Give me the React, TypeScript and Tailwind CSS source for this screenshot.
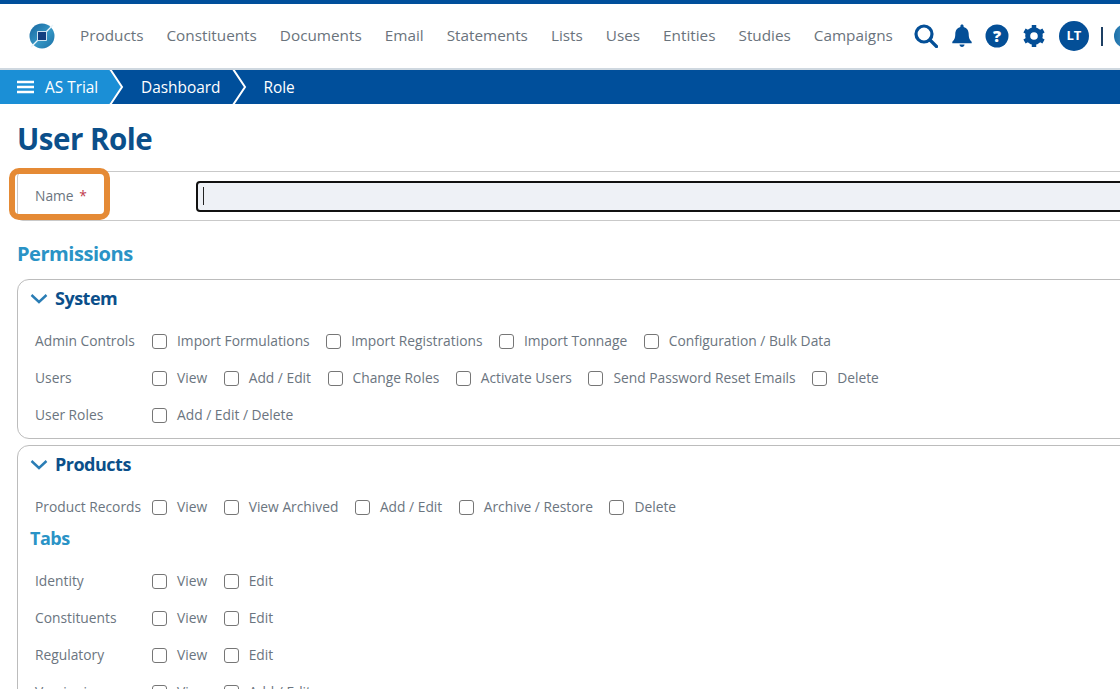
import React from "react";

const font = { fontFamily: '"Open Sans", sans-serif' };

function Check({ label }: { label: string }) {
  return (
    <div className="flex items-center shrink-0">
      <span className="w-[15px] h-[15px] border border-[#767676] rounded-[3px] bg-white shrink-0" />
      <span className="ml-[10px] text-[13.8px] text-[#6b7580] whitespace-nowrap">{label}</span>
    </div>
  );
}

function Row({ label, items }: { label: string; items: string[] }) {
  return (
    <div className="flex items-center h-[37px]">
      <div className="w-[117px] shrink-0 text-[13.8px] text-[#6b7580] whitespace-nowrap">{label}</div>
      <div className="flex items-center gap-[16.5px]">
        {items.map((l) => (
          <Check key={l} label={l} />
        ))}
      </div>
    </div>
  );
}

function Chevron() {
  return (
    <svg width="18" height="10" viewBox="0 0 18 10" fill="none" stroke="#2a7db5" strokeWidth="2.400" className="-ml-[5px]">
      <path d="M1.500 1l7.500 7 7.500-7" />
    </svg>
  );
}

const nav = ["Products", "Constituents", "Documents", "Email", "Statements", "Lists", "Uses", "Entities", "Studies", "Campaigns"];

export default function App() {
  return (
    <div className="w-[1120px] h-[689px] overflow-hidden bg-white" style={font}>
      <div className="h-[4px] bg-[#004f9b]" />
      <div className="h-[66px] flex items-center border-b-2 border-[#cfd8e0]">
        <svg width="26" height="26" viewBox="0 0 26 26" className="ml-[29px] shrink-0">
          <defs>
            <linearGradient id="logo" x1="0" y1="0" x2="1" y2="1">
              <stop offset="0" stopColor="#17659f" />
              <stop offset="0.55" stopColor="#3596c4" />
              <stop offset="1" stopColor="#1a6fa6" />
            </linearGradient>
          </defs>
          <circle cx="13" cy="13" r="12.500" fill="url(#logo)" />
          <path d="M2 24 L9 17 M17 9 L24 2" stroke="#eaf4fa" strokeWidth="1.400" />
          <rect x="8" y="8" width="10" height="10" rx="1" fill="#cfe4f1" />
          <rect x="9" y="9" width="8" height="8" fill="#123f80" />
        </svg>
        <nav className="flex ml-[25px] pb-[2px] gap-[23px] text-[15.3px] text-[#6a737c] whitespace-nowrap">
          {nav.map((n) => (
            <span key={n}>{n}</span>
          ))}
        </nav>
        <div className="flex items-center ml-[21px] shrink-0">
          <svg width="24" height="24" viewBox="0 0 24 24" fill="none" stroke="#044f97" strokeWidth="3.200" strokeLinecap="round">
            <circle cx="10" cy="10" r="8" />
            <path d="M16 16l6.500 6.500" />
          </svg>
          <svg width="24" height="24" viewBox="0 0 24 24" fill="#044f97" className="ml-[12px]">
            <path d="M12 .5c-1 0-1.600.7-1.600 1.600v.9C7 3.800 5.300 6.800 5.300 10c0 4.700-1.500 6.300-3 7.800v1.500h19.400v-1.500c-1.500-1.500-3-3.100-3-7.800 0-3.200-1.700-6.200-5.100-7V2.100c0-.9-.6-1.600-1.600-1.600z" />
            <path d="M9.500 20.500h5c0 1.300-1.100 2.500-2.500 2.500s-2.500-1.200-2.500-2.500z" />
          </svg>
          <svg width="24" height="24" viewBox="0 0 24 24" className="ml-[11px]">
            <circle cx="12" cy="12" r="11.500" fill="#044f97" />
            <text x="12" y="17.500" textAnchor="middle" fontSize="16" fontWeight="800" fill="#fff" fontFamily="Open Sans">?</text>
          </svg>
          <svg width="24" height="24" viewBox="0 0 24 24" className="ml-[13px]" fill="none" stroke="#044f97">
            <circle cx="12" cy="12" r="6.300" strokeWidth="5" />
            <path strokeWidth="4.500" d="M12 1v4M12 19v4M2.500 6.500l3.500 2M18 15.500l3.500 2M2.500 17.500l3.500-2M18 8.500l3.500-2" />
          </svg>
          <div className="ml-[13px] w-[30px] h-[30px] rounded-full bg-[#044f97] text-white text-[13px] font-bold flex items-center justify-center">LT</div>
          <div className="ml-[12px] w-[2px] h-[19px] bg-[#1d3f63]" />
          <div className="ml-[11px] w-[24px] h-[24px] rounded-full bg-gradient-to-r from-[#1b6fa8] to-[#62b4de] shrink-0" />
        </div>
      </div>
      <div className="h-[34px] flex items-stretch bg-[#004f9b] text-white text-[15.4px] relative">
        <div className="w-[110px] bg-[#1b8fd6] flex items-center pl-[17px] shrink-0">
          <svg width="17" height="14" viewBox="0 0 17 14" stroke="#fff" strokeWidth="2.400">
            <path d="M0 2h17M0 7h17M0 12h17" />
          </svg>
          <span className="ml-[11px] mt-[2px]">AS Trial</span>
        </div>
        <svg width="16" height="34" viewBox="0 0 16 34" className="absolute left-[109px] top-0">
          <path d="M0 0L13 17L0 34Z" fill="#1b8fd6" />
          <path d="M1 -1L13 17L1 35" fill="none" stroke="#fff" strokeWidth="2" />
        </svg>
        <span className="ml-[31px] mt-[2px] self-center">Dashboard</span>
        <svg width="16" height="34" viewBox="0 0 16 34" className="absolute left-[232px] top-0">
          <path d="M1 -1L13 17L1 35" fill="none" stroke="#fff" strokeWidth="2" />
        </svg>
        <span className="ml-[43px] mt-[2px] self-center">Role</span>
      </div>
      <div className="pl-[17px]">
        <h1 className="text-[29.5px] leading-[40px] font-bold text-[#0b4f8a] mt-[15px] tracking-[-0.5px]">User Role</h1>
        <div className="relative mt-[12px] h-[50px] border-y border-l border-[#c9c9c9] rounded-l-[6px] flex items-center">
          <div className="absolute -left-[9px] top-[-4px] w-[101px] h-[52px] border-[6px] border-[#e58a35] rounded-[10px]" />
          <span className="ml-[17px] w-[161px] text-[13.8px] text-[#6b7580] shrink-0">
            Name <span className="text-[#c0394b] ml-[2px]">*</span>
          </span>
          <div className="h-[31px] w-[1000px] shrink-0 border-2 border-[#111] rounded-[4px] bg-[#eef1f6] flex items-center pl-[5px]">
            <span className="w-px h-[18px] bg-[#222]" />
          </div>
        </div>
        <h2 className="mt-[18px] text-[20.1px] leading-[30px] font-bold text-[#2a93c6] tracking-[-0.5px]">Permissions</h2>
        <div className="mt-[10px] w-[1200px] h-[160px] border border-[#bcbcbc] rounded-[12px] pl-[17px]">
          <div className="flex items-center h-[37px]">
            <Chevron />
            <span className="ml-[7px] text-[18px] font-bold text-[#0b4f8a] tracking-[-0.5px]">System</span>
          </div>
          <div className="mt-[6px]">
            <Row label="Admin Controls" items={["Import Formulations", "Import Registrations", "Import Tonnage", "Configuration / Bulk Data"]} />
            <Row label="Users" items={["View", "Add / Edit", "Change Roles", "Activate Users", "Send Password Reset Emails", "Delete"]} />
            <Row label="User Roles" items={["Add / Edit / Delete"]} />
          </div>
        </div>
        <div className="mt-[6px] w-[1200px] h-[300px] border border-[#bcbcbc] rounded-[12px] pl-[17px]">
          <div className="flex items-center h-[37px]">
            <Chevron />
            <span className="ml-[7px] text-[18px] font-bold text-[#0b4f8a] tracking-[-0.5px]">Products</span>
          </div>
          <div className="mt-[6px]">
            <Row label="Product Records" items={["View", "View Archived", "Add / Edit", "Archive / Restore", "Delete"]} />
          </div>
          <h3 className="-ml-[5px] -mt-[1px] text-[18px] leading-[26px] font-bold text-[#2a93c6] tracking-[-0.5px]">Tabs</h3>
          <div className="mt-[12px]">
            <Row label="Identity" items={["View", "Edit"]} />
            <Row label="Constituents" items={["View", "Edit"]} />
            <Row label="Regulatory" items={["View", "Edit"]} />
            <Row label="Versioning" items={["View", "Add / Edit"]} />
          </div>
        </div>
      </div>
    </div>
  );
}
